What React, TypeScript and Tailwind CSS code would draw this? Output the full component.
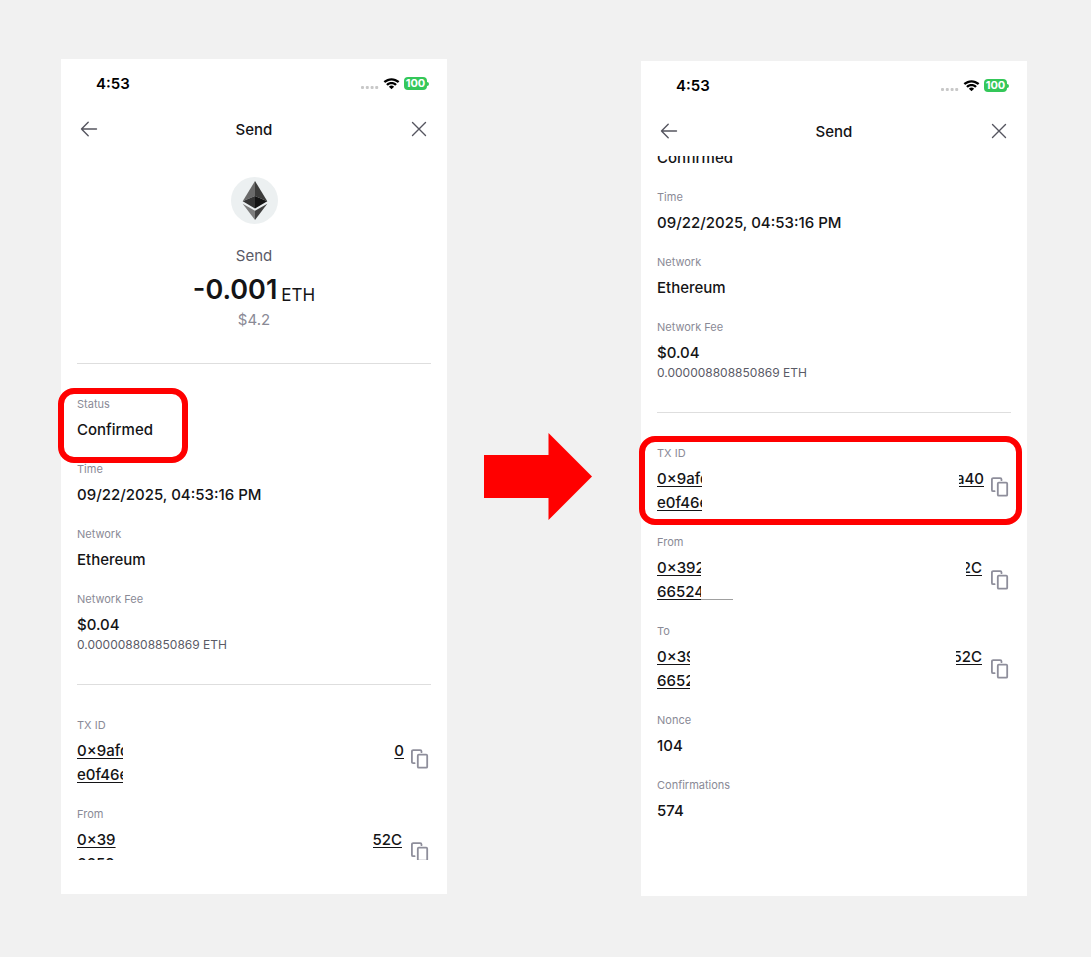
import type { ReactNode } from "react";

type Line = {
  start: string;
  startWidth: string;
  end?: string;
  endWidth?: string;
  tail?: boolean;
};

function StatusIcons() {
  return (
    <div className="flex items-center">
      <svg width="18" height="12" viewBox="0 0 18 12" fill="#c8c8c8" aria-hidden="true">
        <rect x="0" y="8" width="3" height="3" rx="1" />
        <rect x="4.8" y="8" width="3" height="3" rx="1" />
        <rect x="9.6" y="8" width="3" height="3" rx="1" />
        <rect x="14.2" y="8" width="3" height="3" rx="1" />
      </svg>
      <svg className="ml-1" width="17" height="12" viewBox="0 0 17 12" aria-hidden="true">
        <path
          d="M8.5 2.4c2.4 0 4.5.9 6.1 2.4.1.1.3.1.4 0l1.2-1.2c.1-.1.1-.3 0-.5C12-.8 5-.8.8 3.1c-.1.2-.1.4 0 .5L2 4.8c.1.1.3.1.4 0C4 3.3 6.1 2.4 8.5 2.4z"
          fill="#000"
        />
        <path
          d="M8.5 6.3c1.3 0 2.5.5 3.4 1.3.1.1.3.1.5 0l1.2-1.2c.1-.1.1-.3 0-.5-2.9-2.6-7.3-2.6-10.2 0-.1.2-.1.4 0 .5l1.2 1.2c.2.1.4.1.5 0 .9-.8 2.1-1.3 3.4-1.3z"
          fill="#000"
        />
        <path d="M10.9 8.9c.1-.1.1-.3 0-.4-1.4-1.2-3.4-1.2-4.8 0-.1.1-.1.3 0 .4l2.2 2.2c.1.1.3.1.4 0z" fill="#000" />
      </svg>
      <span className="ml-1 flex h-[13px] w-[23px] items-center justify-center rounded-[4px] bg-[#34c759] text-[11px] leading-[13px] font-bold text-white">
        100
      </span>
      <span className="h-1 w-[2px] rounded-r-sm bg-[#34c759]" />
    </div>
  );
}

function EthLogo() {
  return (
    <svg width="47" height="47" viewBox="0 0 47 47" role="img" aria-label="Ethereum">
      <circle cx="23.5" cy="23.5" r="23.5" fill="#ecf0f1" />
      <path d="M24 4 11.7 24.200 24 19z" fill="#6a6a6a" />
      <path d="M24 4 36.3 24.200 24 19z" fill="#3c3c3b" />
      <path d="M11.7 24.200 24 19V31.400z" fill="#343434" />
      <path d="M36.3 24.200 24 19V31.400z" fill="#141414" />
      <path d="M11.7 26.700 24 33.800V43z" fill="#7d7d7d" />
      <path d="M36.3 26.700 24 33.800V43z" fill="#414141" />
    </svg>
  );
}

function CopyIcon() {
  return (
    <svg width="24" height="24" viewBox="0 0 24 24" fill="none" stroke="#8e8e9b" strokeWidth="1.8" strokeLinejoin="round" strokeLinecap="round" aria-hidden="true">
      <rect x="9.8" y="7.7" width="9.4" height="13" rx="1" />
      <path d="M6.6 16.2H5.2a1.3 1.3 0 0 1-1.3-1.3V4.400a1.3 1.3 0 0 1 1.3-1.3h7a1.3 1.3 0 0 1 1.3 1.3v.8" />
    </svg>
  );
}

function Phone({ className, children, highlight }: { className: string; children: ReactNode; highlight: ReactNode }) {
  return (
    <section className={`relative min-w-0 flex-1 bg-white pb-[34px] ${className}`}>
      <div className="flex h-[50px] items-center justify-between pr-[18px] pb-px pl-[35px]">
        <span className="text-[15px] leading-6 font-semibold text-black">4:53</span>
        <StatusIcons />
      </div>
      <header className="flex h-[45px] items-center justify-between px-[18px] pb-[6px]">
        <button type="button" aria-label="Back">
          <svg width="20" height="20" viewBox="0 0 20 20" fill="none" stroke="#55555f" strokeWidth="1.4" strokeLinecap="round" strokeLinejoin="round">
            <path d="M17.500 10H2.500M9.200 3.300 2.500 10l6.700 6.700" />
          </svg>
        </button>
        <h1 className="pt-[2px] text-[15px] leading-6 font-medium">Send</h1>
        <button type="button" aria-label="Close">
          <svg width="20" height="20" viewBox="0 0 20 20" fill="none" stroke="#55555f" strokeWidth="1.4" strokeLinecap="round">
            <path d="m3.500 3.500 13 13M16.500 3.500l-13 13" />
          </svg>
        </button>
      </header>
      <div className="h-[706px] overflow-hidden px-4">{children}</div>
      {highlight}
    </section>
  );
}

function Field({ label, children }: { label: string; children: ReactNode }) {
  return (
    <div>
      <dt className="mb-1 text-[11px] leading-5 text-[#8a8a96]">{label}</dt>
      <dd className="text-[15px] leading-6 font-medium">{children}</dd>
    </div>
  );
}

function HashField({ label, lines, iconClass, endClass }: { label: string; lines: Line[]; iconClass: string; endClass: string }) {
  return (
    <Field label={label}>
      <div className="flex gap-1">
        <a href="#explorer" className={`min-w-0 flex-1 ${endClass}`}>
          {lines.map((line) => (
            <span key={line.start} className="flex h-6">
              <span className={`overflow-hidden whitespace-nowrap underline underline-offset-2 ${line.startWidth}`}>{line.start}</span>
              {line.tail && <span className="mb-1 w-8 border-b border-[#a0a0a0]" />}
              {line.end && (
                <span className={`ml-auto flex justify-end overflow-hidden whitespace-nowrap underline underline-offset-2 ${line.endWidth}`}>
                  {line.end}
                </span>
              )}
            </span>
          ))}
        </a>
        <button type="button" aria-label={`Copy ${label}`} className={`mr-[-1px] h-6 ${iconClass}`}>
          <CopyIcon />
        </button>
      </div>
    </Field>
  );
}

function Summary() {
  return (
    <dl className="flex flex-col gap-[17px]">
      <Field label="Status">Confirmed</Field>
      <Field label="Time">09/22/2025, 04:53:16 PM</Field>
      <Field label="Network">Ethereum</Field>
      <Field label="Network Fee">
        $0.04
        <span className="block text-xs font-normal text-[#5a5a66]">0.000008808850869 ETH</span>
      </Field>
    </dl>
  );
}

function Divider({ className }: { className: string }) {
  return <hr className={`border-[#dedede] ${className}`} />;
}

export default function App() {
  return (
    <main className="flex min-h-screen items-start bg-[#f1f1f1] pt-[59px] pr-16 pb-[61px] pl-[61px] font-['Inter',sans-serif] text-[#141416]">
      <Phone
        className=""
        highlight={
          <div className="pointer-events-none absolute top-[329px] left-[-3px] h-[75px] w-[130px] rounded-2xl border-[6px] border-[#ff0000]" />
        }
      >
        <div className="flex flex-col items-center pt-[23px]">
          <EthLogo />
          <p className="mt-5 text-[15px] leading-6 text-[#5a5a66]">Send</p>
          <p className="mt-1 flex items-end gap-1 text-[27px] leading-9 font-semibold">
            -0.001 <span className="text-[17px] leading-[26px] font-normal">ETH</span>
          </p>
          <p className="text-[15px] leading-6 text-[#8a8a96]">$4.2</p>
        </div>
        <Divider className="mt-[31px] mb-[30px]" />
        <Summary />
        <Divider className="mt-[31px] mb-[30px]" />
        <dl className="flex flex-col gap-[17px]">
          <HashField
            label="TX ID"
            iconClass="mt-2"
            endClass=""
            lines={[
              { start: "0×9afd", startWidth: "w-[46px]", end: "0", endWidth: "w-[10px]" },
              { start: "e0f46e", startWidth: "w-[46px]" },
            ]}
          />
          <HashField
            label="From"
            iconClass="self-center"
            endClass="pr-[2px]"
            lines={[
              { start: "0×39", startWidth: "w-[39px]", end: "52C", endWidth: "w-[29px]" },
              { start: "6652", startWidth: "w-[38px]" },
            ]}
          />
        </dl>
      </Phone>

      <div className="flex w-[194px] shrink-0 pt-[374px] pl-[37px]">
        <svg width="108" height="87" viewBox="0 0 108 87" role="img" aria-label="Then">
          <path d="M0 22H64.500V0L108 43.500 64.500 87V65H0z" fill="#ff0000" />
        </svg>
      </div>

      <Phone
        className="mt-[2px]"
        highlight={
          <div className="pointer-events-none absolute top-[375px] right-[5px] left-[-2px] h-[89px] rounded-2xl border-[6px] border-[#ff0000]" />
        }
      >
        <div className="-mt-[34px]">
          <Summary />
          <Divider className="mt-[31px] mb-[30px]" />
          <dl className="flex flex-col gap-[17px]">
            <HashField
              label="TX ID"
              iconClass="mt-2"
              endClass=""
              lines={[
                { start: "0×9afd", startWidth: "w-[45px]", end: "a40", endWidth: "w-[25px]" },
                { start: "e0f46e", startWidth: "w-[45px]" },
              ]}
            />
            <HashField
              label="From"
              iconClass="self-center"
              endClass="pr-[2px]"
              lines={[
                { start: "0×392", startWidth: "w-[44px]", end: "2C", endWidth: "w-[16px]" },
                { start: "66524", startWidth: "w-[44px]", tail: true },
              ]}
            />
            <HashField
              label="To"
              iconClass="self-center"
              endClass="pr-[2px]"
              lines={[
                { start: "0×39", startWidth: "w-[33px]", end: "52C", endWidth: "w-[26px]" },
                { start: "6652", startWidth: "w-[33px]" },
              ]}
            />
            <Field label="Nonce">104</Field>
            <Field label="Confirmations">574</Field>
          </dl>
        </div>
      </Phone>
    </main>
  );
}
